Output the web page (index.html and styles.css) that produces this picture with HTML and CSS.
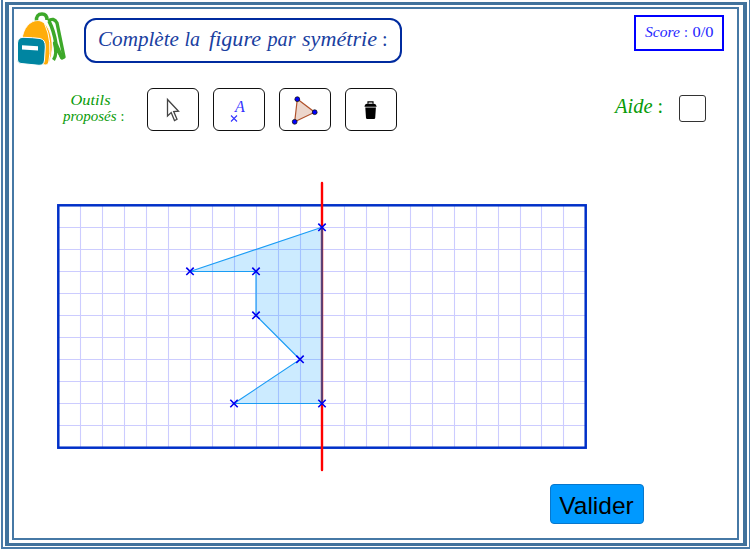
FILE: index.html
```html
<!DOCTYPE html>
<html lang="fr">
<head>
<meta charset="utf-8">
<title>Symétrie axiale</title>
<link rel="stylesheet" href="styles.css">
</head>
<body>
<div class="frame-outer"><div class="frame-middle"><main class="frame-inner">
  <header class="header">
    <svg class="bag" width="52" height="58" viewBox="16 10 52 58">
      <path d="M36.500 21 Q36 14 42 14 Q47 14 47 20" fill="none" stroke="#3da829" stroke-width="3.500"/>
      <path d="M48 21 Q54 17 57 23 L64 57 L62 58 L54.500 43 Q57.500 54 53.500 60" fill="none" stroke="#3da829" stroke-width="3.400" stroke-linejoin="round"/>
      <path d="M49 21 Q54 31 56 44 L62 58" fill="none" stroke="#3da829" stroke-width="3.600"/>
      <path d="M22 40 C23 28 30 20.500 38 20.500 C48 21 53 37 52 50 Q50.500 64 46 65 L22 61Z" fill="#ffad0a" stroke="#fff" stroke-width=".8"/>
      <path d="M44.500 23.500 Q53 42 48.500 64" fill="none" stroke="#fff" stroke-width="1"/>
      <path d="M17.500 43 Q18 37.500 23 37.300 Q33 37.500 40 38.500 Q45.500 39.500 45.300 47 L44.500 60 Q44 65.500 39 65.300 L21 63.500 Q17.500 63.200 17.500 60Z" fill="#0085a1" stroke="#fff" stroke-width="1"/>
      <path d="M22 45.300 L38 46.300 V50.500 L22 49.500Z" fill="#fff"/>
    </svg>
    <div class="title"><svg width="314" height="41" viewBox="86 20 314 41">
      <g class="math navy" font-size="20">
        <text x="98" y="46" textLength="81" lengthAdjust="spacingAndGlyphs">Complète</text>
        <text x="184.500" y="46" textLength="15.500" lengthAdjust="spacingAndGlyphs">la</text>
        <text x="209" y="46" textLength="52" lengthAdjust="spacingAndGlyphs">figure</text>
        <text x="267.500" y="46" textLength="28" lengthAdjust="spacingAndGlyphs">par</text>
        <text x="302" y="46" textLength="75" lengthAdjust="spacingAndGlyphs">symétrie</text>
        <text class="upright" x="382" y="46">:</text>
      </g>
    </svg></div>
    <div class="score"><svg width="86" height="32" viewBox="637 17 86 32">
      <g class="math blue" font-size="14">
        <text x="646" y="37" textLength="35" lengthAdjust="spacingAndGlyphs">Score</text>
        <text class="upright" x="685" y="37">:</text>
        <text class="upright" x="693.500" y="37" textLength="21" lengthAdjust="spacingAndGlyphs">0/0</text>
      </g>
    </svg></div>
  </header>
  <section class="tools">
    <svg class="tools-label" width="66" height="43" viewBox="60 88 66 43">
      <g class="math green" font-size="14">
        <text x="70.500" y="105" textLength="40" lengthAdjust="spacingAndGlyphs">Outils</text>
        <text x="63" y="121" textLength="53.500" lengthAdjust="spacingAndGlyphs">proposés</text>
        <text class="upright" x="120.500" y="121">:</text>
      </g>
    </svg>
    <div class="tool-list">
      <div class="tool"><svg width="50" height="41" viewBox="148 89 50 41">
        <path d="M167.500 99.500 V116 L171.200 112.500 L174.500 120.500 L177 119.300 L173.700 111.500 L178.500 111.200Z" fill="#fff" stroke="#444" stroke-width="1.300"/>
      </svg></div>
      <div class="tool"><svg width="50" height="41" viewBox="214 89 50 41">
        <text class="math point" x="235" y="112" font-size="16">A</text>
        <path d="M231 115.500 L237 121.500 M237 115.500 L231 121.500" stroke="#33f" stroke-width="1.100"/>
      </svg></div>
      <div class="tool"><svg width="50" height="41" viewBox="280 89 50 41">
        <path d="M297.300 99 L314.700 112.200 L294.700 121.800Z" fill="#ecd6cc" stroke="#b0522c" stroke-width="1.200"/>
        <g fill="#00f" stroke="#111" stroke-width=".8"><circle cx="297.300" cy="99.200" r="2.400"/><circle cx="314.700" cy="112.200" r="2.400"/><circle cx="294.700" cy="121.800" r="2.400"/></g>
      </svg></div>
      <div class="tool"><svg width="50" height="41" viewBox="346 89 50 41">
        <path d="M368 103.800 V101.800 H373 V103.800" fill="none" stroke="#000" stroke-width="1.200"/>
        <path d="M364.500 106.800 Q364.800 103.800 367 103.700 H374 Q376.300 103.900 376.700 106.800Z M365.300 107.600 H375.900 L375.200 118 Q375 119 374 119 H367.200 Q366.200 119 366 118Z"/>
      </svg></div>
    </div>
    <svg class="help-label" width="54" height="43" viewBox="612 88 54 43">
      <g class="math green" font-size="20">
        <text x="615" y="113" textLength="37.500" lengthAdjust="spacingAndGlyphs">Aide</text>
        <text class="upright" x="657.500" y="113">:</text>
      </g>
    </svg>
    <div class="checkbox"></div>
  </section>
  <svg class="board" width="532" height="292" viewBox="56 180 532 292">
    <defs>
      <path id="mark" d="M-3.700 -3.700 L3.700 3.700 M3.700 -3.700 L-3.700 3.700"/>
    </defs>
    <path class="grid" d="M80.500 206v241M102.500 206v241M124.500 206v241M146.500 206v241M168.500 206v241M190.500 206v241M212.500 206v241M234.500 206v241M256.500 206v241M278.500 206v241M300.500 206v241M344.500 206v241M366.500 206v241M388.500 206v241M410.500 206v241M432.500 206v241M454.500 206v241M476.500 206v241M498.500 206v241M520.500 206v241M541.500 206v241M563.500 206v241"/>
    <path class="grid" d="M59 227.500h527M59 249.500h527M59 271.500h527M59 293.500h527M59 315.500h527M59 337.500h527M59 359.500h527M59 381.500h527M59 403.500h527M59 425.500h527"/>
    <rect x="58.300" y="205.300" width="527.400" height="242.400" fill="none" stroke="#0030c8" stroke-width="2.500"/>
    <path d="M322 183 V470" stroke="#f00" stroke-width="2.400" stroke-linecap="round"/>
    <path d="M322 227.300 L190 271.500 H256 V315.500 L300 359.500 L234 403.500 H322Z" fill="#0099ff" fill-opacity=".2"/>
    <path d="M322 403.500 V227.300" stroke="#0060b0" stroke-opacity=".58" stroke-width="2"/>
    <path d="M322 227.300 L190 271.500 H256 V315.500 L300 359.500 L234 403.500 H322" fill="none" stroke="#1a9cf5" stroke-width="1.150"/>
    <g stroke="#0000f0" stroke-width="1.600">
      <use href="#mark" x="322" y="227.300"/><use href="#mark" x="190" y="271.300"/><use href="#mark" x="256" y="271.300"/><use href="#mark" x="256" y="315.300"/><use href="#mark" x="300" y="359.300"/><use href="#mark" x="234" y="403.500"/><use href="#mark" x="322" y="403.500"/>
    </g>
  </svg>
  <button class="submit">Valider</button>
</main></div></div>
</body>
</html>
```
FILE: styles.css
```css
* { box-sizing: border-box; }
body { margin: 0; background: #fff; overflow: hidden; }
svg { display: block; }

.frame-outer {
  width: 749px; height: 549px; margin-left: 1px;
  padding: 2px 2px 1px;
  border: solid #4a7ba8;
  border-width: 0 1px 2px 2px;
}
.frame-middle {
  height: 100%;
  padding: 2px 4px 3px 3px;
  border: solid #41729c;
  border-width: 3px 4px;
}
.frame-inner {
  height: 100%;
  display: flex; flex-direction: column; align-items: flex-start;
  border: 2px solid #4678a5;
}

.header { display: flex; align-items: flex-start; width: 723px; height: 79px; padding-left: 2px; }
.bag { margin-top: 1px; }
.title { margin: 9px 0 0 16px; border: 2px solid #002b9f; border-radius: 12px; }
.score { margin: 6px 0 0 232px; border: 2px solid #0000ff; }

.math { font-family: "Liberation Serif", serif; font-style: italic; }
.upright { font-style: normal; }
.navy { fill: #1a409f; }
.blue { fill: #2626ff; }
.green { fill: #089b08; }
.point { fill: #33f; }

.tools { display: flex; align-items: center; height: 43px; padding-left: 46px; }
.tool-list { display: flex; gap: 14px; margin-left: 21px; }
.tool { width: 52px; height: 43px; border: 1.5px solid #111; border-radius: 6px; }
.help-label { margin-left: 215px; }
.checkbox { width: 27px; height: 27px; margin: -3px 0 0 13px; border: 1px solid #333; border-radius: 3px; }

.board { margin: 49px 0 0 42px; }
.grid { stroke: #ccccff; stroke-width: 1.1; }

.submit {
  width: 94px; height: 40px; margin: 12px 0 0 536px; padding: 4px 1px 0 0;
  border: 1px solid #0877cc; border-radius: 4px;
  background: #0099ff; color: #000;
  font: 24.5px/32px "Liberation Sans", sans-serif;
}
```
